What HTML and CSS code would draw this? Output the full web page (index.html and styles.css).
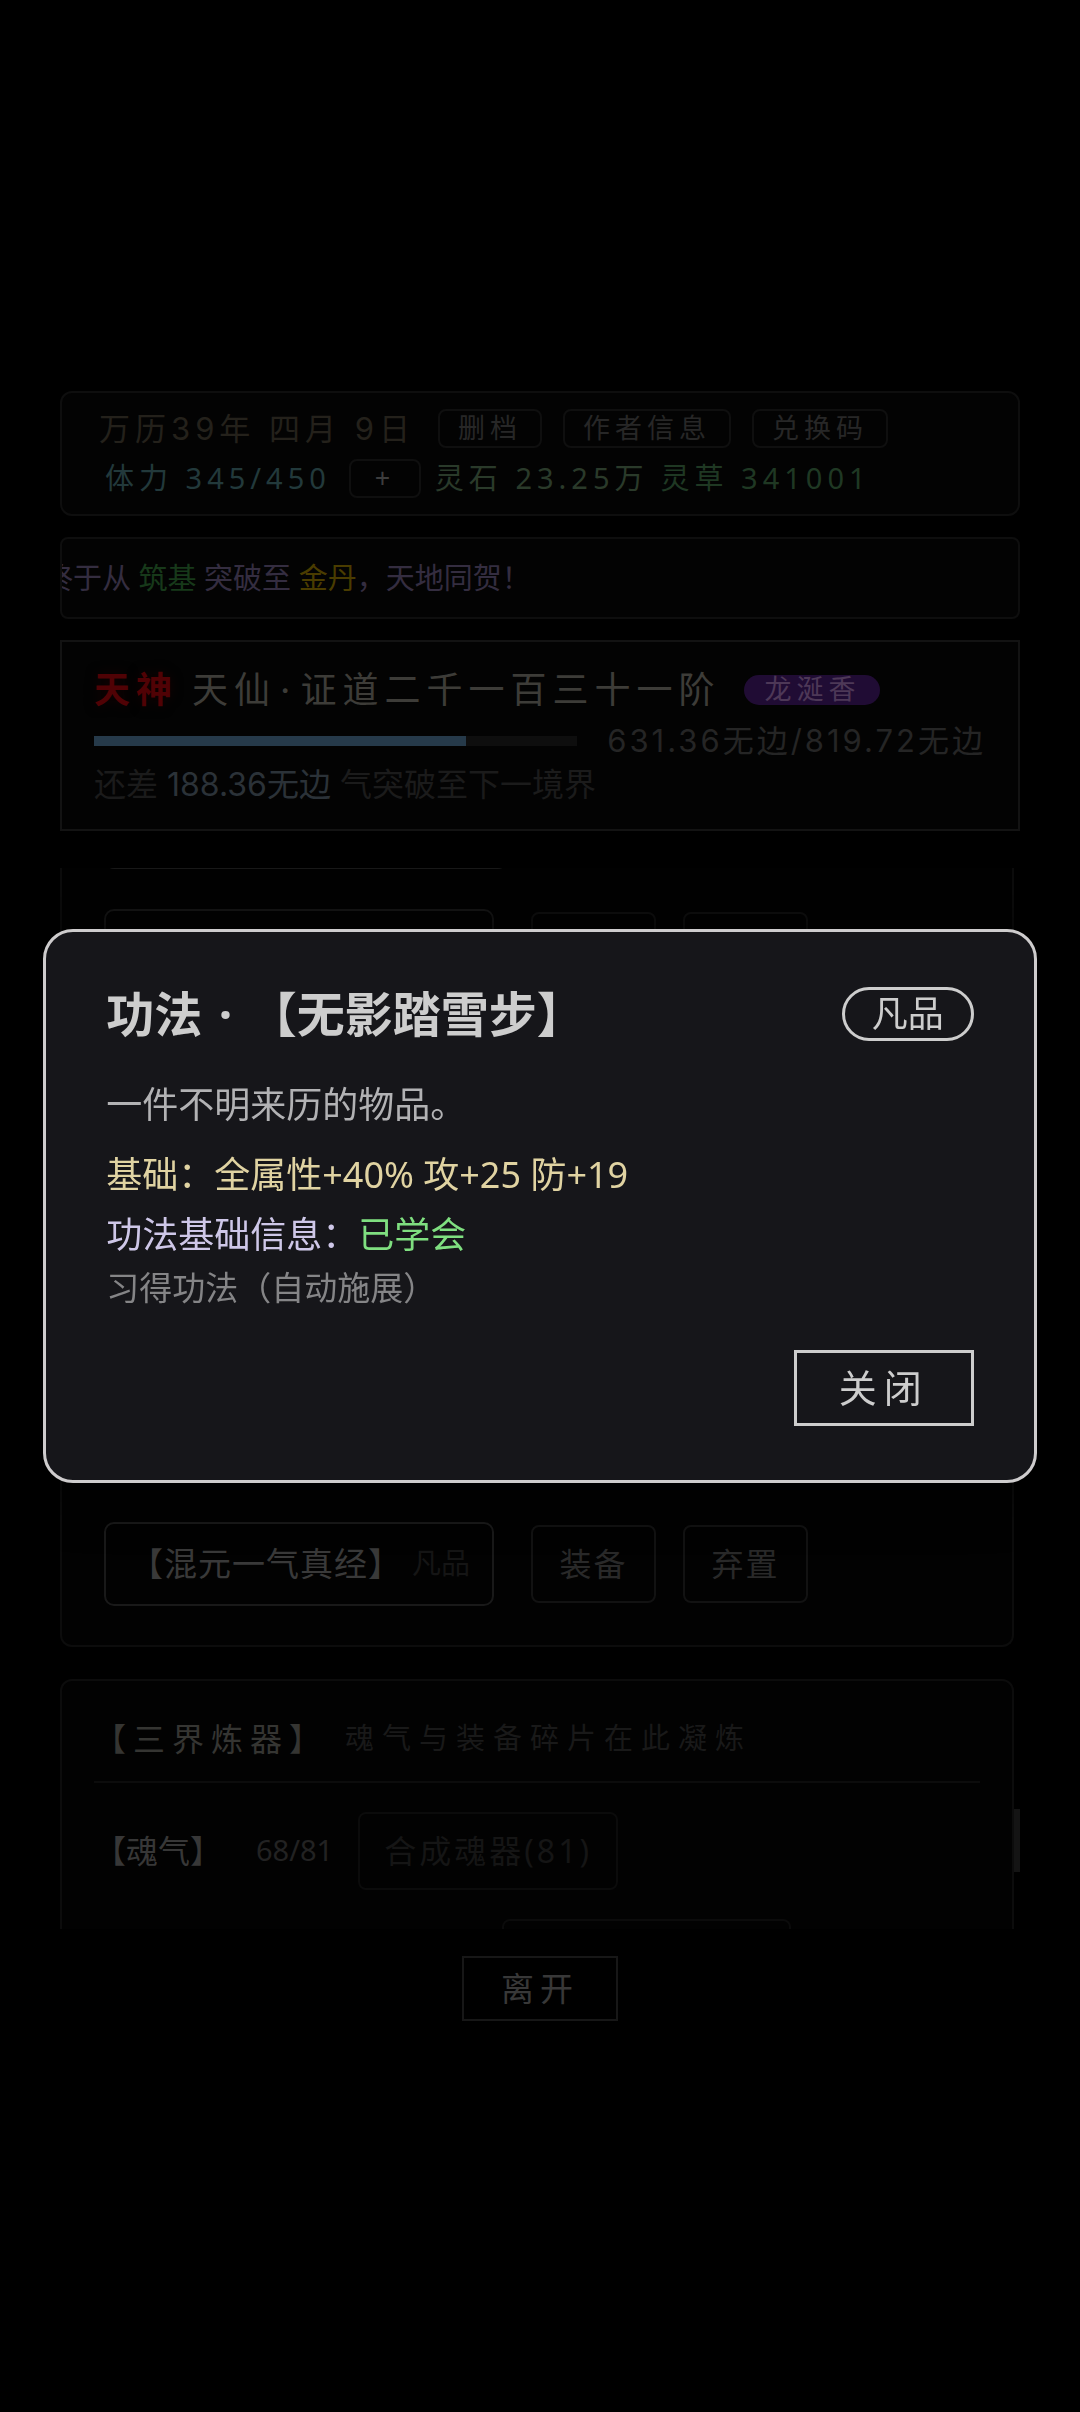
FILE: index.html
```html
<!DOCTYPE html>
<html lang="zh-CN">
<head>
<meta charset="utf-8">
<meta name="viewport" content="width=device-width, initial-scale=1">
<title>功法</title>
<link rel="stylesheet" href="styles.css">
</head>
<body>
<main class="game">
  <header class="card status">
    <div class="status-row">
      <span class="date">万历39年 四月 9日</span>
      <div class="status-actions">
        <button class="chip" type="button">删档</button>
        <button class="chip" type="button">作者信息</button>
        <button class="chip" type="button">兑换码</button>
      </div>
    </div>
    <div class="status-row resources">
      <span class="stamina">体力 345/450</span>
      <button class="chip chip-add" type="button">+</button>
      <span class="stone">灵石 23.25万</span>
      <span class="herb">灵草 341001</span>
    </div>
  </header>

  <section class="card news">
    <p class="news-text">终于从 <span class="stage-low">筑基</span> 突破至 <span class="stage-high">金丹</span>，天地同贺！</p>
  </section>

  <section class="card realm">
    <div class="realm-title">
      <strong class="race">天神</strong>
      <span class="rank">天仙<span class="dot">·</span>证道二千一百三十一阶</span>
      <span class="buff">龙涎香</span>
    </div>
    <div class="realm-progress">
      <div class="bar"><div class="bar-fill" style="width: 77.02%"></div></div>
      <span class="amount">631.36无边/819.72无边</span>
    </div>
    <p class="remain">还差 <span class="remain-value">188.36无边</span> 气突破至下一境界</p>
  </section>

  <div class="scroller">
    <div class="scroll-content">
      <section class="panel bag">
        <div class="item item-cut"></div>
        <div class="item-row">
          <button class="item" type="button"><span class="item-name">【无影踏雪步】</span><span class="item-grade">凡品</span></button>
          <div class="item-actions">
            <button class="action" type="button">装备</button>
            <button class="action" type="button">弃置</button>
          </div>
        </div>
        <div class="item-row item-row-last">
          <button class="item" type="button"><span class="item-name">【混元一气真经】</span><span class="item-grade">凡品</span></button>
          <div class="item-actions">
            <button class="action" type="button">装备</button>
            <button class="action" type="button">弃置</button>
          </div>
        </div>
      </section>
      <section class="panel forge">
        <div class="forge-head">
          <h2 class="forge-title">【三界炼器】</h2>
          <span class="forge-note">魂气与装备碎片在此凝炼</span>
        </div>
        <div class="forge-row">
          <span class="forge-name">【魂气】</span>
          <span class="forge-count">68/81</span>
          <button class="craft" type="button">合成魂器(81)</button>
        </div>
        <div class="forge-row forge-row-next">
          <button class="craft craft-wide" type="button" aria-label="合成"></button>
        </div>
      </section>
    </div>
    <div class="scroll-track"><div class="scroll-thumb" style="top: 88.7%"></div></div>
  </div>

  <button class="leave" type="button">离开</button>
</main>

<dialog class="modal" open aria-labelledby="modal-title">
  <div class="modal-head">
    <h1 class="modal-title" id="modal-title">功法 <span class="dot">·</span> 【无影踏雪步】</h1>
    <span class="grade">凡品</span>
  </div>
  <p class="desc">一件不明来历的物品。</p>
  <p class="base">基础：全属性+40% 攻+25 防+19</p>
  <p class="info">功法基础信息：<span class="learned">已学会</span></p>
  <p class="hint">习得功法（自动施展）</p>
  <div class="modal-foot">
    <button class="close" type="button">关闭</button>
  </div>
</dialog>
</body>
</html>
```

FILE: styles.css
```css
* {
  box-sizing: border-box;
}

body {
  margin: 0;
  background: #000;
  color: #303030;
  font-family: "Noto Sans", "Noto Sans CJK SC", sans-serif;
  line-height: 1.2;
}

h1,
h2,
p {
  margin: 0;
  font-weight: 400;
}

button {
  margin: 0;
  padding: 0;
  background: none;
  color: inherit;
  font-family: inherit;
  line-height: 1.2;
}

.dot {
  margin: 0 4px;
}

/* Page column */
.game {
  display: flex;
  flex-direction: column;
  justify-content: center;
  min-height: 100vh;
  padding: 0 60px;
}

.card {
  border: 2px solid #0e0e0e;
  background: #030303;
  margin-bottom: 21px;
}

/* Status card */
.status {
  display: flex;
  flex-direction: column;
  gap: 11px;
  padding: 16px 37px;
  border-radius: 12px;
}

.status-row {
  display: flex;
  align-items: center;
  height: 39px;
  white-space: nowrap;
}

.date {
  color: #24211b;
  font-family: Inter, "Noto Sans CJK SC", sans-serif;
  font-size: 31px;
  line-height: 39px;
  letter-spacing: 5px;
  margin-right: 23px;
}

.status-actions {
  display: flex;
  gap: 21px;
}

.chip {
  height: 39px;
  padding: 0 18px;
  border: 2px solid #0f0f0f;
  border-radius: 8px;
  color: #272727;
  font-size: 27px;
  line-height: 34px;
  letter-spacing: 5px;
}

.resources {
  padding-left: 6px;
  font-size: 29px;
  letter-spacing: 5px;
}

.stamina {
  color: #22393b;
}

.chip-add {
  width: 72px;
  margin: 0 14px 0 18px;
  color: #3d3d3d;
}

.stone {
  color: #2a3a2a;
  margin-right: 12px;
}

.herb {
  color: #1f3823;
}

/* News ticker */
.news {
  overflow: hidden;
  height: 82px;
  border-radius: 8px;
}

.news-text {
  margin-left: -18px;
  color: #342d40;
  font-size: 29px;
  line-height: 78px;
  white-space: nowrap;
}

.stage-low {
  color: #17391a;
}

.stage-high {
  color: #4a3c00;
}

/* Realm card */
.realm {
  padding: 24px 32px 22px;
  border-color: #131313;
  margin-bottom: 37px;
  font-family: Inter, "Noto Sans CJK SC", sans-serif;
}

.realm-title {
  display: flex;
  align-items: center;
  height: 48px;
  margin-bottom: 5px;
  font-size: 36px;
  line-height: 48px;
  letter-spacing: 6px;
  white-space: nowrap;
}

.race {
  color: #500205;
  text-shadow: 0 0 12px #140000;
  margin-right: 14px;
}

.rank {
  color: #3d3c38;
  margin-right: 24px;
}

.buff {
  padding: 0 20px;
  border-radius: 15px;
  background: #200c34;
  color: #4d3857;
  font-size: 27px;
  line-height: 30px;
  letter-spacing: 5px;
}

.realm-progress {
  display: flex;
  align-items: center;
  gap: 30px;
  line-height: 44px;
}

.bar {
  flex: 1;
  height: 10px;
  background: #0e0e0e;
}

.bar-fill {
  height: 100%;
  background: #263a4a;
}

.amount {
  color: #252525;
  font-size: 31px;
  letter-spacing: 3px;
  white-space: nowrap;
}

.remain {
  color: #1b1b1b;
  font-size: 32px;
  line-height: 44px;
}

.remain-value {
  color: #2b3238;
}

/* Scrolling inventory */
.scroller {
  display: flex;
  height: 44vh;
  overflow: hidden;
}

.scroll-content {
  flex: 1;
}

.scroll-track {
  position: relative;
  width: 6px;
}

.scroll-thumb {
  position: absolute;
  width: 6px;
  height: 63px;
  background: #141414;
}

.panel {
  border: 2px solid #0c0c0c;
  border-radius: 12px;
  background: #020202;
}

.bag {
  display: flex;
  flex-direction: column;
  height: 779px;
  padding: 0 42px 39px;
  border-top: 0;
  border-top-left-radius: 0;
  border-top-right-radius: 0;
  margin-bottom: 32px;
}

.item-row {
  display: flex;
  align-items: center;
  gap: 37px;
}

.item-row-last {
  margin-top: auto;
}

.item {
  display: flex;
  align-items: center;
  justify-content: space-between;
  width: 390px;
  height: 84px;
  padding: 0 22px 0 24px;
  border: 2px solid #191919;
  border-radius: 10px;
  white-space: nowrap;
}

.item-cut {
  flex: none;
  width: 404px;
  margin: -83px 0 40px;
}

.item-name {
  color: #393939;
  font-size: 33px;
  letter-spacing: 1px;
}

.item-grade {
  color: #151515;
  font-size: 29px;
}

.item-actions {
  display: flex;
  gap: 27px;
}

.action {
  width: 125px;
  height: 78px;
  border: 2px solid #121212;
  border-radius: 8px;
  color: #292929;
  font-size: 32px;
  letter-spacing: 2px;
}

/* Forge panel */
.forge {
  padding: 34px 32px;
}

.forge-head {
  display: flex;
  align-items: center;
  height: 68px;
  border-bottom: 2px solid #0c0c0c;
  padding-bottom: 18px;
  margin-bottom: 29px;
  white-space: nowrap;
}

.forge-title {
  color: #353532;
  font-size: 32px;
  letter-spacing: 7px;
  margin-right: 17px;
}

.forge-note {
  color: #191919;
  font-size: 29px;
  letter-spacing: 8px;
}

.forge-row {
  display: flex;
  align-items: center;
  white-space: nowrap;
}

.forge-name {
  color: #373737;
  font-size: 32px;
  margin-right: 34px;
}

.forge-count {
  color: #222222;
  font-size: 29px;
  margin-right: 25px;
}

.craft {
  width: 260px;
  height: 78px;
  border: 2px solid #0b0b0b;
  border-radius: 8px;
  color: #151515;
  font-size: 32px;
  letter-spacing: 3px;
}

.forge-row-next {
  margin-top: 29px;
  padding-left: 408px;
}

.craft-wide {
  width: 289px;
}

.leave {
  align-self: center;
  width: 156px;
  height: 65px;
  margin-top: 27px;
  border: 2px solid #171717;
  color: #383838;
  font-size: 33px;
  letter-spacing: 6px;
}

/* Item dialog */
.modal {
  position: fixed;
  inset: 0;
  width: 92vw;
  height: fit-content;
  margin: auto;
  padding: 54px 60px;
  border: 3px solid #cecccd;
  border-radius: 30px;
  background: #16161a;
  box-shadow: 0 0 60px #000;
  font-size: 36px;
  line-height: 54px;
}

.modal-head {
  display: flex;
  align-items: center;
  justify-content: space-between;
  height: 56px;
  margin-bottom: 36px;
}

.modal-title {
  color: #cdcdcd;
  font-size: 48px;
  font-weight: 700;
  line-height: 56px;
  white-space: nowrap;
}

.grade {
  padding: 0 27px;
  border: 3px solid #cdcdcd;
  border-radius: 27px;
  color: #cdcdcd;
  line-height: 48px;
}

.desc {
  margin-bottom: 16px;
  color: #b2b2b4;
}

.base {
  margin-bottom: 6px;
  color: #e0d3a2;
}

.info {
  margin-bottom: 3px;
  color: #cec7e8;
}

.learned {
  color: #7fdf80;
}

.hint {
  color: #858587;
  font-size: 33px;
  line-height: 46px;
}

.modal-foot {
  display: flex;
  justify-content: flex-end;
  margin-top: 39px;
}

.close {
  width: 180px;
  height: 76px;
  border: 3px solid #cdcdcd;
  color: #cdcdcd;
  font-size: 38px;
  letter-spacing: 7px;
}
```
